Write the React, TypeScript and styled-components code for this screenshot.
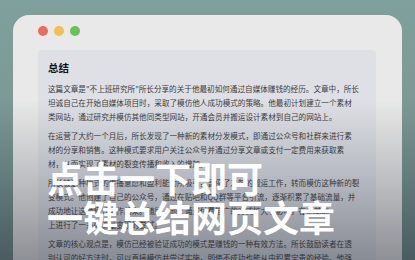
import React from "react";
import styled, { createGlobalStyle } from "styled-components";

const Global = createGlobalStyle`
  html, body { margin: 0; padding: 0; }
  body { font-family: "Noto Sans CJK SC", "Noto Sans", sans-serif; }
`;

const Page = styled.div`
  position: relative;
  width: 415px;
  height: 260px;
  overflow: hidden;
  background: linear-gradient(180deg, #7fa09c 0%, #7a9995 45%, #6f8a88 100%);
  padding: 15px 13px 0 13px;
  box-sizing: border-box;
`;

const Window = styled.div`
  background: #e9e9e9;
  border-radius: 16px 16px 0 0;
  height: 300px;
  padding: 11px 26px 0 25px;
  box-sizing: border-box;
  display: flex;
  flex-direction: column;
  gap: 14px;
`;

const Lights = styled.div`
  display: flex;
  gap: 6px;
  padding-left: 0;
`;

const Light = styled.span<{ $c: string }>`
  width: 10px;
  height: 10px;
  border-radius: 50%;
  background: ${(p) => p.$c};
`;

const Card = styled.div`
  background: #dee0e6;
  border-radius: 4px 4px 0 0;
  padding: 11px 10px 0 10px;
  flex: 1;
`;

const Title = styled.div`
  font-size: 10.5px;
  line-height: 14px;
  font-weight: 700;
  color: #141414;
  margin-bottom: 7px;
`;

const Para = styled.div`
  font-size: 7.6px;
  line-height: 14px;
  color: #3d3d40;
  margin-bottom: 5px;
`;

const Line = styled.div`
  white-space: nowrap;
`;

const Shade = styled.div`
  position: absolute;
  inset: 0;
  background: linear-gradient(
    180deg,
    rgba(30, 36, 50, 0) 0%,
    rgba(30, 36, 50, 0) 38%,
    rgba(30, 36, 50, 0.22) 70%,
    rgba(30, 36, 50, 0.45) 100%
  );
  pointer-events: none;
`;

const Headline = styled.div`
  position: absolute;
  left: 47px;
  top: 158px;
  color: #ffffff;
  font-size: 36px;
  line-height: 39px;
  font-weight: 700;
  white-space: nowrap;
`;

const paras: string[][] = [
  [
    "这篇文章是\"不上班研究所\"所长分享的关于他最初如何通过自媒体赚钱的经历。文章中，所长",
    "坦诚自己在开始自媒体项目时，采取了模仿他人成功模式的策略。他最初计划建立一个素材",
    "类网站，通过研究并模仿其他同类型网站，开通会员并搬运设计素材到自己的网站上。",
  ],
  [
    "在运营了大约一个月后，所长发现了一种新的素材分发模式，即通过公众号和社群来进行素",
    "材的分享和销售。这种模式要求用户关注公众号并通过分享文章或支付一定费用来获取素",
    "材，从而实现了素材的裂变传播和收入的增加。",
  ],
  [
    "所长被这种模式的传播意愿和盈利能力所吸引，暂停了之前的搬运工作，转而模仿这种新的裂",
    "变模式。他创建了自己的公众号，通过在贴吧和QQ群等平台引流，逐渐积累了基础流量，并",
    "成功地让这种模式运作起来。随后，他又通过付费推广的方式扩大了影响，在此基础",
    "上进行了一系列流量变现的尝试。",
  ],
  [
    "文章的核心观点是，模仿已经被验证成功的模式是赚钱的一种有效方法。所长鼓励读者在透",
    "别认可的好方法时，可以直接模仿并尝试实施，即使不成功也能从中积累宝贵的经验。他强",
  ],
];

export default function App() {
  return (
    <>
      <Global />
      <Page>
        <Window>
          <Lights>
            <Light $c="#ee6a5f" />
            <Light $c="#f5be4f" />
            <Light $c="#62c554" />
          </Lights>
          <Card>
            <Title>总结</Title>
            {paras.map((p, i) => (
              <Para key={i}>
                {p.map((l, j) => (
                  <Line key={j}>{l}</Line>
                ))}
              </Para>
            ))}
          </Card>
        </Window>
        <Shade />
        <Headline>
          点击一下即可
          <br />
          一键总结网页文章
        </Headline>
      </Page>
    </>
  );
}
